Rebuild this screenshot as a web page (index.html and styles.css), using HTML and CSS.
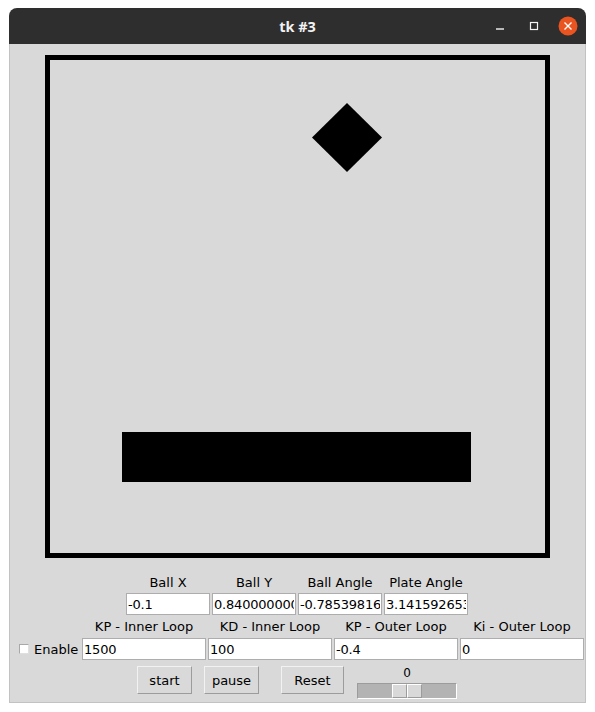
FILE: index.html
```html
<!DOCTYPE html>
<html>
<head>
<meta charset="utf-8">
<link rel="stylesheet" href="styles.css">
</head>
<body>
<div class="window">
  <div class="titlebar">
    <div></div>
    <div class="title">tk #3</div>
    <div class="wm">
      <svg width="91" height="36" viewBox="0 0 91 36">
        <line x1="1" y1="21" x2="9" y2="21" stroke="#f4f4f4" stroke-width="1.4"/>
        <rect x="35.5" y="14.5" width="7" height="7" fill="none" stroke="#f4f4f4" stroke-width="1.2"/>
        <circle cx="73" cy="18" r="9.5" fill="#e95420"/>
        <path d="M69.5 14.5 L76.5 21.5 M76.5 14.5 L69.5 21.5" stroke="#ffffff" stroke-width="1.4"/>
      </svg>
    </div>
  </div>
  <div class="content">
    <svg class="canvas" width="505" height="503" viewBox="0 0 505 503">
      <rect x="2.5" y="2.5" width="500" height="498" fill="none" stroke="#000" stroke-width="5"/>
      <polygon points="302,48 337,82.5 302,117 267,82.5" fill="#000"/>
      <rect x="77" y="377" width="349" height="50" fill="#000"/>
    </svg>
    <div class="grid4 labels1">
      <div class="lbl">Ball X</div>
      <div class="lbl">Ball Y</div>
      <div class="lbl">Ball Angle</div>
      <div class="lbl">Plate Angle</div>
    </div>
    <div class="grid4 entries1">
      <input class="entry" type="text" value="-0.1">
      <input class="entry" type="text" value="0.8400000000000001">
      <input class="entry" type="text" value="-0.7853981633974483">
      <input class="entry" type="text" value="3.141592653589793">
    </div>
    <div class="grid5 labels2">
      <div></div>
      <div class="lbl">KP - Inner Loop</div>
      <div class="lbl">KD - Inner Loop</div>
      <div class="lbl">KP - Outer Loop</div>
      <div class="lbl">Ki - Outer Loop</div>
    </div>
    <div class="grid5 entries2">
      <label class="check"><span class="box"></span><span class="check-text">Enable</span></label>
      <input class="entry" type="text" value="1500">
      <input class="entry" type="text" value="100">
      <input class="entry" type="text" value="-0.4">
      <input class="entry" type="text" value="0">
    </div>
    <div class="buttons">
      <button class="btn btn-start">start</button>
      <button class="btn btn-pause">pause</button>
      <button class="btn btn-reset">Reset</button>
      <div class="scale">
        <div class="scale-value">0</div>
        <div class="trough">
          <span class="slider-half"></span><span class="slider-half"></span>
        </div>
      </div>
    </div>
  </div>
</div>
</body>
</html>
```
FILE: styles.css
```css
html, body {
  margin: 0;
  padding: 0;
  background: #ffffff;
}
body {
  font-family: "DejaVu Sans", sans-serif;
  font-size: 13px;
  color: #000;
}
.window {
  margin: 8px 0 0 9px;
  width: 577px;
}
.titlebar {
  height: 36px;
  background: #2e2e2e;
  border-radius: 8px 8px 0 0;
  display: grid;
  grid-template-columns: 1fr auto 1fr;
  align-items: center;
}
.title {
  font-family: "Noto Sans", sans-serif;
  font-weight: bold;
  font-size: 14.5px;
  color: #f2f2f2;
  line-height: 36px;
}
.wm {
  display: flex;
  justify-content: flex-end;
}
.wm svg {
  display: block;
}
.content {
  box-sizing: border-box;
  height: 659px;
  background: #d9d9d9;
  border: 1px solid #c2c2c2;
  border-top: none;
  display: flex;
  flex-direction: column;
}
.canvas {
  display: block;
  margin: 11px 0 0 35px;
}
.grid4 {
  display: grid;
  grid-template-columns: repeat(4, 84px);
  column-gap: 2px;
  margin-left: 116px;
}
.grid5 {
  display: grid;
  grid-template-columns: 61px repeat(4, 124px);
  column-gap: 2px;
  margin-left: 9px;
}
.lbl {
  text-align: center;
  line-height: 16px;
  white-space: nowrap;
}
.labels1 {
  margin-top: 17px;
}
.entries1 {
  margin-top: 2px;
}
.labels2 {
  margin-top: 4px;
}
.entries2 {
  margin-top: 3px;
}
.entry {
  box-sizing: border-box;
  height: 22px;
  width: 100%;
  margin: 0;
  padding: 0 1px;
  border: 1px solid #adadad;
  background: #ffffff;
  font-family: "DejaVu Sans", sans-serif;
  font-size: 13px;
  letter-spacing: -0.2px;
  color: #000;
  outline: none;
}
.check {
  display: flex;
  align-items: center;
}
.box {
  box-sizing: border-box;
  width: 10px;
  height: 10px;
  background: #ffffff;
  border: 1px solid;
  border-color: #a8a8a8 #e0e0e0 #e0e0e0 #a8a8a8;
}
.check-text {
  margin-left: 5px;
}
.buttons {
  display: flex;
  margin-top: 6px;
  padding-left: 127px;
  align-items: flex-start;
}
.btn {
  box-sizing: border-box;
  height: 28px;
  margin: 0;
  padding: 0;
  background: #d9d9d9;
  border: 1px solid;
  border-color: #f2f2f2 #9c9c9c #9c9c9c #f2f2f2;
  font-family: "DejaVu Sans", sans-serif;
  font-size: 13px;
  color: #000;
}
.btn-start { width: 55px; }
.btn-pause { width: 55px; margin-left: 12px; }
.btn-reset { width: 63px; margin-left: 22px; }
.scale {
  margin-left: 13px;
  width: 100px;
  display: flex;
  flex-direction: column;
}
.scale-value {
  text-align: center;
  font-size: 12px;
  line-height: 14px;
}
.trough {
  box-sizing: border-box;
  margin-top: 3px;
  height: 16px;
  background: #b3b3b3;
  border: 1px solid;
  border-color: #9c9c9c #ffffff #ffffff #9c9c9c;
  display: flex;
  padding-left: 34px;
}
.slider-half {
  box-sizing: border-box;
  width: 15px;
  height: 14px;
  background: #d9d9d9;
  border: 1px solid;
  border-color: #ffffff #9c9c9c #9c9c9c #ffffff;
}
```
